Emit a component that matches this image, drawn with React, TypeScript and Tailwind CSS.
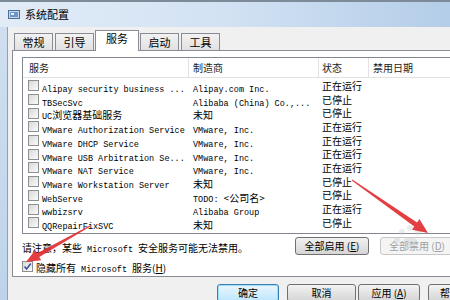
import React from 'react'

const rows: [string, string, string][] = [
  ['Alipay security business ...', 'Alipay.com Inc.', '正在运行'],
  ['TBSecSvc', 'Alibaba (China) Co.,...', '已停止'],
  ['UC浏览器基础服务', '未知', '已停止'],
  ['VMware Authorization Service', 'VMware, Inc.', '正在运行'],
  ['VMware DHCP Service', 'VMware, Inc.', '正在运行'],
  ['VMware USB Arbitration Se...', 'VMware, Inc.', '正在运行'],
  ['VMware NAT Service', 'VMware, Inc.', '正在运行'],
  ['VMware Workstation Server', '未知', '已停止'],
  ['WebServe', 'TODO: <公司名>', '已停止'],
  ['wwbizsrv', 'Alibaba Group', '正在运行'],
  ['QQRepairFixSVC', '未知', '已停止'],
]

// latin runs in a mono face, CJK runs a bit larger like SimSun
function Mixed({ text }: { text: string }) {
  const parts = text.split(/([\u3000-\u9fff\uff00-\uffef<>]+)/)
  return (
    <>
      {parts.map((p, i) =>
        /[\u3000-\u9fff\uff00-\uffef]/.test(p) ? (
          <span key={i} className="font-['Noto_Sans_CJK_SC',sans-serif] text-[10px]">
            {p}
          </span>
        ) : (
          <span key={i} className="font-['Liberation_Mono',monospace] text-[8.5px]">
            {p}
          </span>
        )
      )}
    </>
  )
}

function Check({ checked = false }: { checked?: boolean }) {
  return (
    <div className="relative h-[11px] w-[11px] shrink-0 border border-[#8e8f8f] bg-gradient-to-br from-[#d9d9d9] to-[#fbfbfb]">
      {checked && (
        <svg viewBox="0 0 11 11" className="absolute -left-px -top-px h-[11px] w-[11px]">
          <path d="M2.5 5.5 L4.6 8 L8.8 2.6" fill="none" stroke="#3c5598" strokeWidth="1.6" />
        </svg>
      )}
    </div>
  )
}

function Tab({ label, active = false }: { label: string; active?: boolean }) {
  return (
    <div
      className={
        active
          ? 'relative z-10 -mx-px flex h-[21px] w-[44px] items-start justify-center border border-b-0 border-[#898c95] bg-white pt-[2px]'
          : 'flex h-[18px] w-[39px] items-center justify-center border border-b-0 border-[#898c95] bg-gradient-to-b from-[#f2f2f2] to-[#e0e0e0]'
      }
    >
      <span className="text-[11px] leading-none text-black">{label}</span>
    </div>
  )
}

function Btn({ children, disabled = false, focused = false, w }: { children: React.ReactNode; disabled?: boolean; focused?: boolean; w: string }) {
  return (
    <div
      className={[
        'flex h-[18px] shrink-0 items-center rounded-[3px] border text-[10px] leading-none',
        w,
        disabled
          ? 'border-[#c7c7c7] bg-[#f4f4f4] text-[#a0a0a0]'
          : focused
            ? 'border-[#3c7fb1] bg-gradient-to-b from-[#eaf6fd] to-[#bee6fd] text-black shadow-[inset_0_0_0_1px_#9fdcf9]'
            : 'border-[#707070] bg-gradient-to-b from-[#f2f2f2] to-[#d5d5d5] text-black',
      ].join(' ')}
    >
      {children}
    </div>
  )
}

export default function App() {
  return (
    <div className="relative h-[300px] w-[450px] overflow-hidden bg-[#f0f0f0] font-['Noto_Sans_CJK_SC',sans-serif]">
      {/* title bar */}
      <div className="flex h-[27px] items-center gap-[5px] border-t-2 border-[#7d8b99] bg-gradient-to-r from-[#e2ecf7] via-[#d2e2f3] to-[#b4cde8] pl-[8px]">
        <svg viewBox="0 0 12 10" className="h-[10px] w-[12px]">
          <rect x="0.5" y="0.5" width="11" height="8" fill="#c8d8ea" stroke="#4c6e9a" />
          <rect x="2" y="2" width="8" height="5" fill="#6f93c6" />
          <rect x="3" y="3" width="3" height="2" fill="#e8f0fa" />
        </svg>
        <span className="text-[11px] leading-none text-black">系统配置</span>
      </div>

      <div className="flex h-[273px]">
        {/* left window frame */}
        <div className="w-[8px] shrink-0 border-r border-[#8da2b9] bg-gradient-to-b from-[#cfdff0] to-[#bed3ea]" />

        <div className="flex min-w-0 flex-1 flex-col pl-[4px] pt-[3px]">
          {/* tabs */}
          <div className="flex h-[21px] shrink-0 items-end gap-[2px] pl-[2px]">
            <Tab label="常规" />
            <Tab label="引导" />
            <Tab label="服务" active />
            <Tab label="启动" />
            <Tab label="工具" />
          </div>

          {/* tab panel */}
          <div className="-mt-px flex h-[227px] w-[460px] shrink-0 flex-col border border-[#898c95] bg-white pl-[9px] pt-[6px]">
            <div className="h-[177px] w-[440px] shrink-0 border border-[#828790] bg-white">
              <div className="flex h-[20px] items-center border-b border-[#e2e2e2] text-[10px] text-[#1a1a1a]">
                <div className="flex h-full w-[166px] items-center border-r border-[#e2e2e2] pl-[6px]">服务</div>
                <div className="flex h-full w-[130px] items-center border-r border-[#e2e2e2] pl-[4px]">制造商</div>
                <div className="flex h-full w-[50px] items-center border-r border-[#e2e2e2] pl-[3px]">状态</div>
                <div className="flex h-full items-center pl-[4px]">禁用日期</div>
              </div>
              <div className="pt-[1px]">
                {rows.map(([svc, maker, state]) => (
                  <div key={svc} className="flex h-[13.7px] items-center text-black">
                    <div className="flex w-[166px] items-center gap-[3px] pl-[5px] whitespace-nowrap">
                      <Check />
                      <span className="leading-none">
                        <Mixed text={svc} />
                      </span>
                    </div>
                    <div className="w-[130px] pl-[4px] leading-none whitespace-nowrap">
                      <Mixed text={maker} />
                    </div>
                    <div className="pl-[3px] text-[10px] leading-none">{state}</div>
                  </div>
                ))}
              </div>
            </div>

            <div className="flex h-[22px] shrink-0 items-center pt-[1px]">
              <div className="w-[273px] whitespace-nowrap leading-none text-black">
                <Mixed text="请注意，某些 Microsoft 安全服务可能无法禁用。" />
              </div>
              <Btn w="w-[74px] justify-center">
                全部启用 (<span className="underline">E</span>)
              </Btn>
              <div className="w-[11px] shrink-0" />
              <Btn w="w-[74px] justify-center" disabled>
                全部禁用 (<span className="underline">D</span>)
              </Btn>
            </div>

            <div className="flex h-[20px] shrink-0 items-center gap-[3px]">
              <Check checked />
              <span className="whitespace-nowrap leading-none text-black">
                <Mixed text="隐藏所有 Microsoft 服务" />
                <span className="text-[10px]">
                  (<span className="underline">H</span>)
                </span>
              </span>
            </div>
          </div>

          {/* dialog buttons */}
          <div className="flex shrink-0 pl-[205px] pt-[7px]">
            <Btn w="w-[62px] justify-center" focused>
              确定
            </Btn>
            <div className="w-[8px] shrink-0" />
            <Btn w="w-[69px] justify-center">取消</Btn>
            <div className="w-[2px] shrink-0" />
            <Btn w="w-[62px] justify-center">
              应用 (<span className="underline">A</span>)
            </Btn>
            <div className="w-[8px] shrink-0" />
            <Btn w="w-[40px] justify-start pl-[11px]">帮</Btn>
          </div>
        </div>
      </div>

      {/* faint watermark paw + red annotation arrows */}
      <svg className="pointer-events-none absolute left-0 top-0 h-[300px] w-[450px]" viewBox="0 0 450 300">
        <g fill="#c8c8c8" opacity="0.35">
          <circle cx="402" cy="232" r="3" />
          <circle cx="410" cy="228" r="3" />
          <circle cx="418" cy="232" r="3" />
          <circle cx="397" cy="240" r="3" />
          <ellipse cx="410" cy="242" rx="7" ry="5" />
        </g>
        <polygon
          points="90.25,226.43 39.3,257 41.2,260.3 26,262 35.2,249.9 37.1,253.2 89.75,225.57"
          fill="#e02a2e"
          opacity="0.9"
        />
        <polygon
          points="351.7,180.4 414.3,226.4 412,229.7 428,233 419.4,219.1 417.1,222.4 352.3,179.6"
          fill="#e02a2e"
          opacity="0.9"
        />
      </svg>
    </div>
  )
}
